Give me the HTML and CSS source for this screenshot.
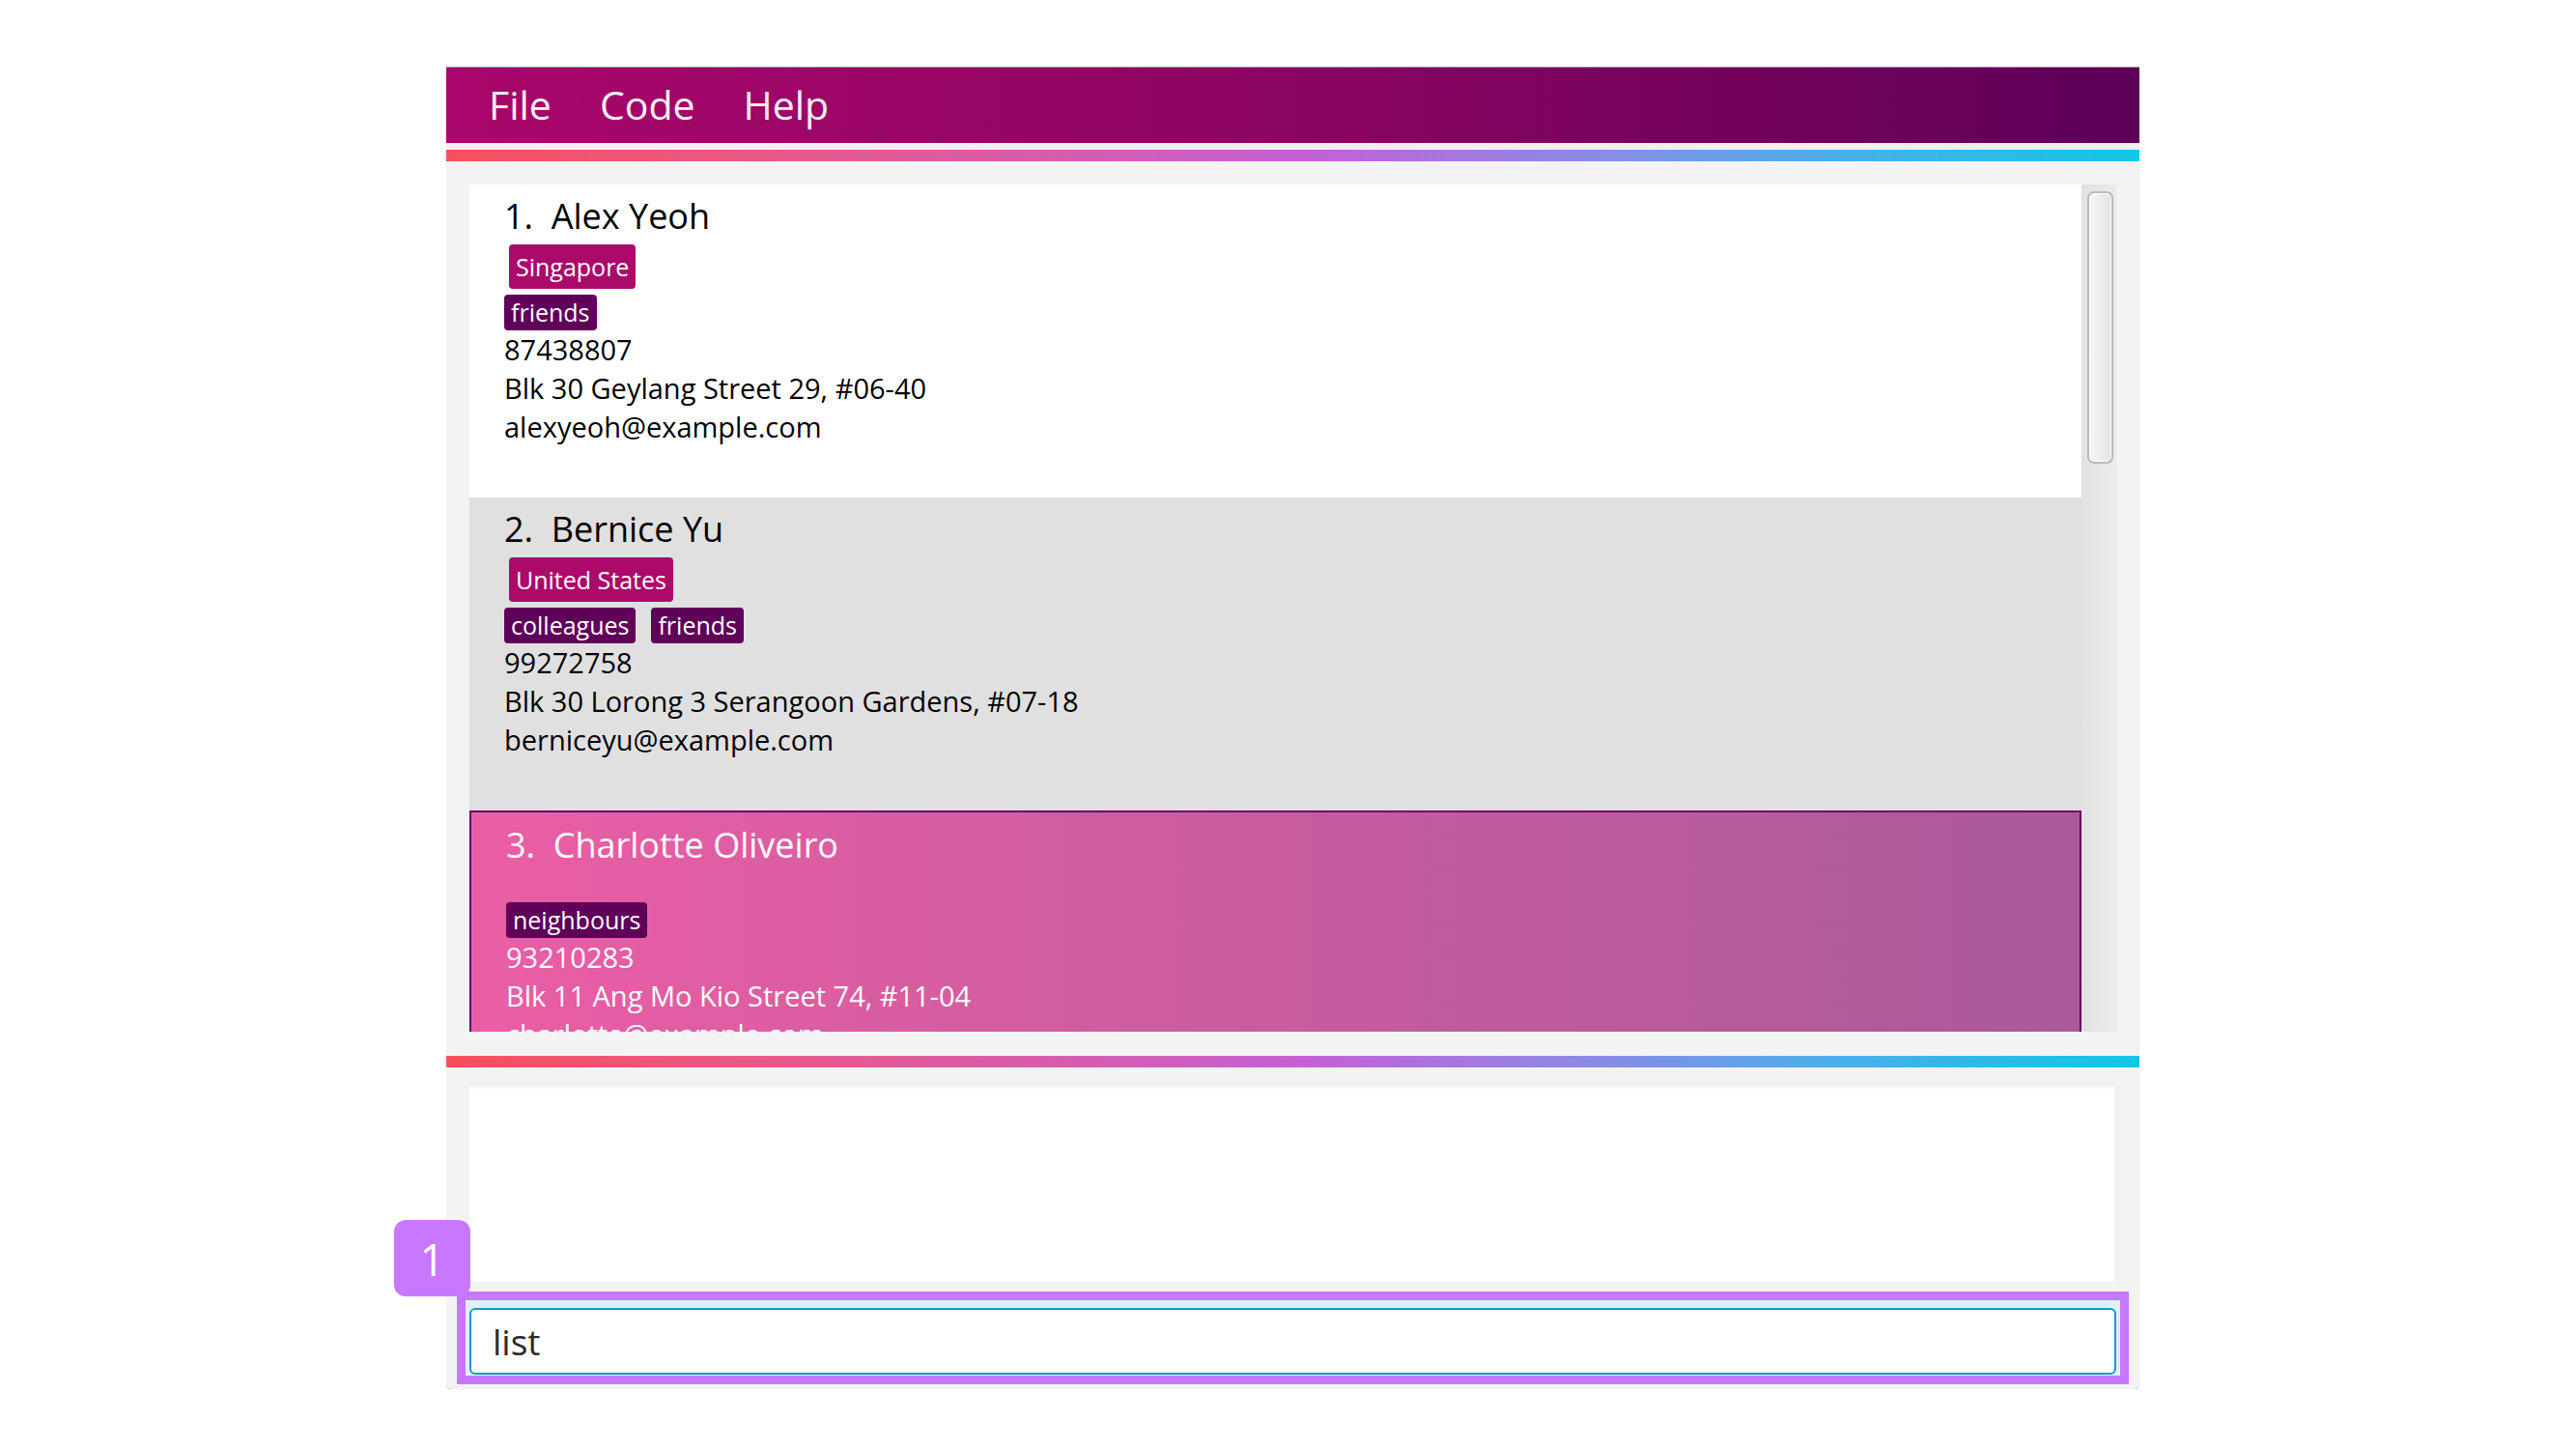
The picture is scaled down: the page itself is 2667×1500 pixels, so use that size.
FILE: index.html
```html
<!DOCTYPE html>
<html lang="en">
<head>
<meta charset="utf-8">
<title>Address App</title>
<link rel="stylesheet" href="styles.css">
</head>
<body>
<div class="frame">
  <div class="menubar">
    <span class="menu-item">File</span>
    <span class="menu-item">Code</span>
    <span class="menu-item">Help</span>
  </div>
  <div class="topgap"></div>
  <div class="gradbar"></div>
  <div class="list-section">
    <div class="list">
      <div class="card card-plain">
        <div class="name">1.&nbsp;&nbsp;Alex Yeoh</div>
        <div class="country-row"><span class="country">Singapore</span></div>
        <div class="tag-row"><span class="tag">friends</span></div>
        <div class="detail">87438807</div>
        <div class="detail">Blk 30 Geylang Street 29, #06-40</div>
        <div class="detail">alexyeoh@example.com</div>
      </div>
      <div class="card card-alt">
        <div class="name">2.&nbsp;&nbsp;Bernice Yu</div>
        <div class="country-row"><span class="country">United States</span></div>
        <div class="tag-row"><span class="tag">colleagues</span><span class="tag">friends</span></div>
        <div class="detail">99272758</div>
        <div class="detail">Blk 30 Lorong 3 Serangoon Gardens, #07-18</div>
        <div class="detail">berniceyu@example.com</div>
      </div>
      <div class="card card-selected">
        <div class="name">3.&nbsp;&nbsp;Charlotte Oliveiro</div>
        <div class="country-row country-empty"></div>
        <div class="tag-row"><span class="tag">neighbours</span></div>
        <div class="detail">93210283</div>
        <div class="detail">Blk 11 Ang Mo Kio Street 74, #11-04</div>
        <div class="detail">charlotte@example.com</div>
      </div>
    </div>
    <div class="scrollbar"><div class="thumb"></div></div>
  </div>
  <div class="midgap"></div>
  <div class="gradbar"></div>
  <div class="result"></div>
  <div class="cmd-wrap">
    <div class="cmd-input">list</div>
  </div>
  <div class="badge">1</div>
</div>
</body>
</html>
```

FILE: styles.css
```css
html, body {
  margin: 0;
  padding: 0;
  background: #ffffff;
}

body {
  font-family: "Open Sans", "Noto Sans", sans-serif;
}

.frame {
  position: relative;
  margin: 69px 0 0 462px;
  width: 1753px;
  height: 1369px;
  background: #f3f3f3;
  display: flex;
  flex-direction: column;
  box-sizing: border-box;
  border-radius: 0 0 6px 6px;
  box-shadow: 0 2px 2px -1px rgba(0, 0, 0, 0.35);
}

.menubar {
  height: 79px;
  flex: none;
  display: flex;
  align-items: center;
  gap: 26px;
  padding-left: 32px;
  padding-bottom: 3px;
  background: linear-gradient(90deg, #a9076b 0%, #8f0562 45%, #5e0058 100%);
  border-top: 1px solid #a08aa0;
  box-sizing: border-box;
}

.menu-item {
  padding: 0 12px;
  font-size: 41px;
  color: #fbeef7;
  line-height: 56px;
}

.topgap {
  height: 7px;
  flex: none;
  background: #f2eff2;
}

.gradbar {
  height: 12px;
  flex: none;
  background: linear-gradient(90deg, #f84f5c 0%, #e65a8f 22%, #d45db2 38%, #c262d8 52%, #8a8ce6 68%, #4aaee9 82%, #12c7e6 100%);
}

.list-section {
  flex: none;
  height: 901px;
  padding: 24px 24px 0 24px;
  box-sizing: border-box;
  display: flex;
}

.list {
  flex: 1;
  background: #ffffff;
  overflow: hidden;
}

.scrollbar {
  width: 36px;
  flex: none;
  background: linear-gradient(90deg, #e2e2e2, #ebebeb);
}

.thumb {
  margin: 7px 0 0 6px;
  width: 27px;
  height: 282px;
  box-sizing: border-box;
  border: 2px solid #b9b9b9;
  border-radius: 7px;
  background: linear-gradient(90deg, #f6f6f6, #e3e3e3);
  box-shadow: inset 0 0 0 1px #ffffff;
}

.card {
  padding: 10px 0 53px 36px;
  color: #000000;
}

.card-plain {
  background: #ffffff;
}

.card-alt {
  background: #e0e0e0;
}

.card-selected {
  padding-top: 11px;
  background: linear-gradient(90deg, #eb5ea5 0%, #c85c9f 50%, #aa5a99 100%);
  border: 2px solid #6a0060;
  color: #ffffff;
}

.name {
  font-size: 36px;
  line-height: 46px;
  white-space: nowrap;
}

.country-row {
  margin-top: 6px;
  height: 46px;
  display: flex;
}

.country-empty {
  height: 24px;
}

.country {
  margin-left: 5px;
  padding: 6px 7px;
  background: #ac0a6b;
  color: #ffffff;
  font-size: 25px;
  line-height: 34px;
  border-radius: 4px;
}

.tag-row {
  margin-top: 6px;
  height: 37px;
  display: flex;
  gap: 16px;
}

.tag {
  padding: 1px 7px 2px 7px;
  background: #5f0059;
  color: #ffffff;
  font-size: 25px;
  line-height: 34px;
  border-radius: 4px;
}

.detail {
  font-size: 29px;
  line-height: 40px;
  white-space: nowrap;
}

.midgap {
  height: 25px;
  flex: none;
}

.result {
  flex: none;
  margin: 15px 26px 0 24px;
  height: 207px;
  background: linear-gradient(#e9e9e9 0px, #f7f7f7 5px, #ffffff 8px);
  border-radius: 4px;
}

.cmd-wrap {
  flex: none;
  margin: 10px 0 0 11px;
  width: 1731px;
  height: 96px;
  box-sizing: border-box;
  border: 9px solid #c878ff;
  background: #dff0f8;
  padding: 8px 4px 1px 4px;
}

.cmd-input {
  height: 69px;
  box-sizing: border-box;
  border: 2px solid #0b9bd0;
  border-radius: 6px;
  background: #ffffff;
  padding-left: 22px;
  font-size: 37px;
  line-height: 65px;
  color: #2b2b2b;
}

.badge {
  position: absolute;
  left: -54px;
  top: 1194px;
  width: 79px;
  height: 79px;
  border-radius: 12px;
  background: #c878ff;
  color: #ffffff;
  font-size: 46px;
  display: flex;
  align-items: center;
  justify-content: center;
}
```
